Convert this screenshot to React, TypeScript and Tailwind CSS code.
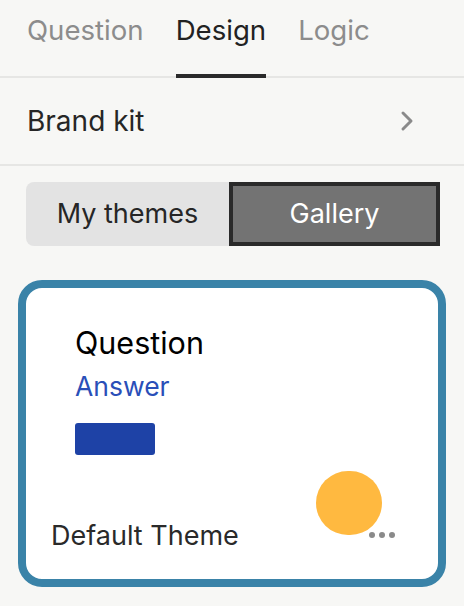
import React from 'react';

const tabs = ['Question', 'Design', 'Logic'];

export default function App() {
    const active = 'Design';

    return (
        <div className="w-[464px] h-[606px] overflow-hidden bg-[#f7f7f5] font-['Inter',sans-serif]">
            {/* tabs */}
            <div className="flex gap-[32px] pl-[27px] border-b-2 border-[#e6e6e4]">
                {tabs.map((t) => (
                    <div
                        key={t}
                        className={`pt-[14px] pb-[28px] -mb-[2px] text-[27.6px] leading-[32px] border-b-4 ${t === active ? 'text-[#222222] border-[#2a2a2a]' : 'text-[#8c8c8c] border-transparent'}`}
                    >
                        {t}
                    </div>
                ))}
            </div>

            {/* brand kit */}
            <div className="flex items-center justify-between h-[88px] pl-[27px] pr-[50px] border-b-2 border-[#e6e6e4]">
                <span className="text-[28px] leading-[32px] text-[#262626]">Brand kit</span>
                <svg width="14" height="22" viewBox="0 0 14 22" fill="none">
                    <path d="M3 3 L11 11 L3 19" stroke="#8a8a8a" strokeWidth="3" strokeLinecap="round" strokeLinejoin="round" />
                </svg>
            </div>

            {/* segmented */}
            <div className="mt-[16px] mx-[26px] w-[414px] h-[64px] flex">
                <button className="flex-1 flex items-center justify-center rounded-l-[8px] bg-[#e3e3e3] text-[27px] text-[#262626]">My themes</button>
                <button className="flex-1 flex items-center justify-center text-[27px] text-white bg-[#737373] border-4 border-[#2a2a2a]">Gallery</button>
            </div>

            {/* theme card */}
            <div className="mt-[34px] mx-[18px] border-8 border-[#3a83a8] rounded-[24px] bg-white overflow-hidden">
                <div className="pl-[49px] pt-[37px]">
                    <div className="text-[30.5px] leading-[36px] text-black">Question</div>
                    <div className="mt-[9px] text-[26.5px] leading-[32px] text-[#2a4fb8]">Answer</div>
                    <div className="mt-[21px] w-[80px] h-[32px] rounded-[3px] bg-[#1e42a6]"></div>
                </div>
                <div className="mt-[16px] pb-[27px] flex items-end justify-between pl-[25px]">
                    <span className="text-[27px] leading-[32px] text-[#2a2a2a]">Default Theme</span>
                    <div className="relative mr-[56px] mb-[17px] w-[66px] h-[64px] rounded-full bg-[#ffb940]">
                        <div className="absolute top-[61px] left-[53px] flex gap-[4px]">
                            <span className="w-[6px] h-[6px] rounded-full bg-[#8a8a8a]"></span>
                            <span className="w-[6px] h-[6px] rounded-full bg-[#8a8a8a]"></span>
                            <span className="w-[6px] h-[6px] rounded-full bg-[#8a8a8a]"></span>
                        </div>
                    </div>
                </div>
            </div>
        </div>
    );
}
